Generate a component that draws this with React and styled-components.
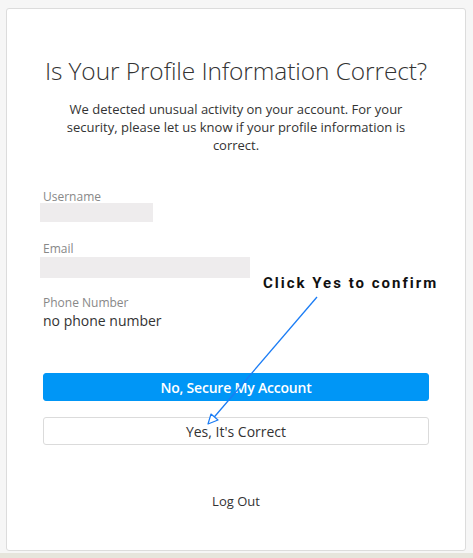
import React from "react";
import styled, { createGlobalStyle } from "styled-components";

const GlobalStyle = createGlobalStyle`
  html, body {
    margin: 0;
    padding: 0;
  }
  body {
    background-color: #f6f6f6;
    font-family: "Open Sans", "Noto Sans", sans-serif;
    color: #333;
    height: 558px;
    overflow: hidden;
  }
`;

const Page = styled.div`
  padding: 8px 7px 0 6px;
  height: 558px;
  box-sizing: border-box;
  display: flex;
  flex-direction: column;
`;

const Card = styled.div`
  position: relative;
  height: 543px;
  box-sizing: border-box;
  background-color: #fff;
  border: 1px solid #dcdcdc;
  border-radius: 3px;
  padding: 47px 36px 0 36px;
  display: flex;
  flex-direction: column;
`;

const Strip = styled.div`
  margin: 2px -7px 0 -6px;
  flex: 1;
  background-color: #e6e5dc;
`;

const Title = styled.h1`
  margin: 0 -20px;
  font-size: 24.5px;
  font-weight: 300;
  line-height: 30px;
  text-align: center;
  white-space: nowrap;
  color: #333;
  letter-spacing: -0.1px;
`;

const Intro = styled.p`
  margin: 14px 10px 0;
  font-size: 13px;
  line-height: 18px;
  text-align: center;
  color: #333;
`;

const Fields = styled.div`
  margin-top: 36px;
  display: flex;
  flex-direction: column;
`;

const Field = styled.div`
  display: flex;
  flex-direction: column;
  margin-top: ${(p) => p.$top || 0}px;
`;

const Label = styled.label`
  font-size: 12px;
  line-height: 13px;
  color: #888;
  margin-bottom: ${(p) => p.$gap || 0}px;
`;

const Blank = styled.div`
  margin-left: -3px;
  width: ${(p) => p.$w}px;
  height: ${(p) => p.$h}px;
  background-color: #eeeced;
`;

const Value = styled.div`
  font-size: 14px;
  line-height: 18px;
  color: #333;
`;

const Actions = styled.div`
  margin-top: 43px;
  display: flex;
  flex-direction: column;
  gap: 16px;
`;

const Button = styled.button`
  height: 28px;
  width: 100%;
  box-sizing: border-box;
  border-radius: 3px;
  font-family: inherit;
  font-size: 14px;
  cursor: pointer;
  background-color: ${(p) => (p.$primary ? "#0096f6" : "#fff")};
  color: ${(p) => (p.$primary ? "#fff" : "#333")};
  border: 1px solid ${(p) => (p.$primary ? "#0096f6" : "#dbdbdb")};
  font-weight: ${(p) => (p.$primary ? 600 : 400)};
  letter-spacing: ${(p) => (p.$primary ? "-0.2px" : "0")};
`;

const LogOut = styled.a`
  margin-top: 47px;
  align-self: center;
  font-size: 13px;
  color: #333;
  text-decoration: none;
`;

const Note = styled.div`
  position: absolute;
  left: 256px;
  top: 265px;
  font-family: Roboto, "Liberation Sans", sans-serif;
  font-weight: 700;
  font-size: 15px;
  letter-spacing: 2px;
  color: #111;
`;

const Arrow = styled.svg`
  position: absolute;
  left: 0;
  top: 0;
  pointer-events: none;
`;

function App() {
  return (
    <>
      <GlobalStyle />
      <Page>
        <Card>
          <Title>Is Your Profile Information Correct?</Title>
          <Intro>
            We detected unusual activity on your account. For your security,
            please let us know if your profile information is correct.
          </Intro>
          <Fields>
            <Field>
              <Label>Username</Label>
              <Blank $w={113} $h={19} />
            </Field>
            <Field $top={20}>
              <Label $gap={2}>Email</Label>
              <Blank $w={210} $h={21} />
            </Field>
            <Field $top={18}>
              <Label $gap={3}>Phone Number</Label>
              <Value>no phone number</Value>
            </Field>
          </Fields>
          <Actions>
            <Button $primary>No, Secure My Account</Button>
            <Button>Yes, It's Correct</Button>
          </Actions>
          <LogOut href="#">Log Out</LogOut>
          <Note>Click Yes to confirm</Note>
          <Arrow width="459" height="541" viewBox="0 0 459 541">
            <line x1="310" y1="288" x2="203" y2="413" stroke="#1a7cf5" strokeWidth="1.3" />
            <path d="M201 415 L204 405 L211 411 Z" fill="#fff" stroke="#1a7cf5" strokeWidth="1.2" strokeLinejoin="round" />
          </Arrow>
        </Card>
        <Strip />
      </Page>
    </>
  );
}

export default App;
